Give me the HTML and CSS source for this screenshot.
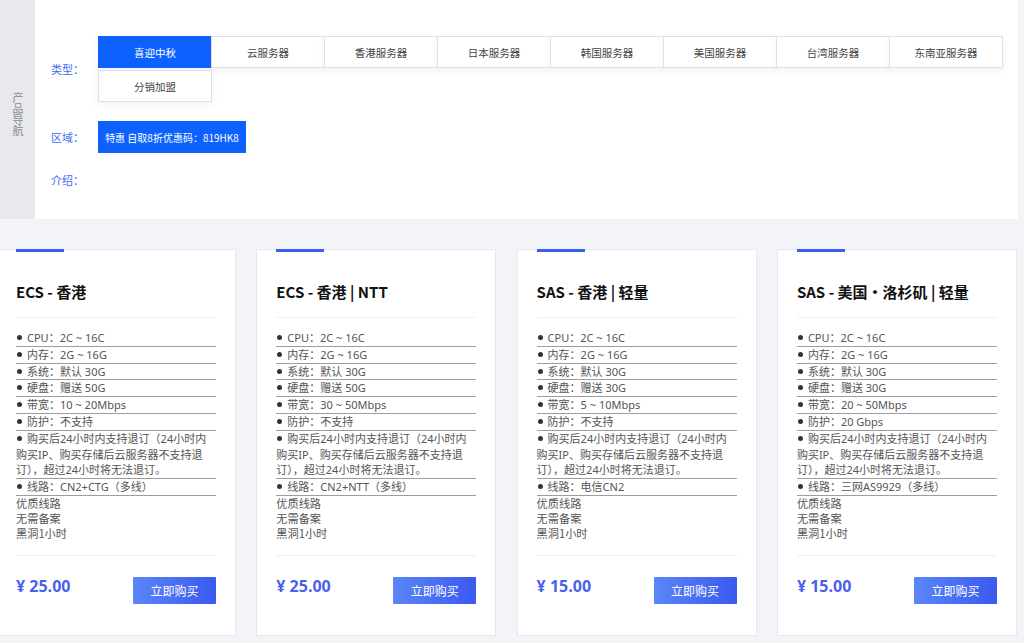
FILE: index.html
```html
<!DOCTYPE html>
<html lang="zh-CN">
<head>
<meta charset="utf-8">
<title>产品导航</title>
<link rel="stylesheet" href="styles.css">
</head>
<body>
<div class="top">
  <div class="side"><span class="side-text">产品导航</span></div>
  <div class="panel">
    <div class="row row-type">
      <div class="label">类型：</div>
      <div class="tabs">
        <div class="tab active">喜迎中秋</div>
        <div class="tab">云服务器</div>
        <div class="tab">香港服务器</div>
        <div class="tab">日本服务器</div>
        <div class="tab">韩国服务器</div>
        <div class="tab">美国服务器</div>
        <div class="tab">台湾服务器</div>
        <div class="tab">东南亚服务器</div>
        <div class="tab">分销加盟</div>
      </div>
    </div>
    <div class="row row-region">
      <div class="label">区域：</div>
      <div class="region-btn">特惠 自取8折优惠码：819HK8</div>
    </div>
    <div class="row row-intro">
      <div class="label">介绍：</div>
    </div>
  </div>
</div>

<div class="cards">
  <div class="card">
    <div class="accent"></div>
    <h3 class="title">ECS - 香港</h3>
    <ul class="specs">
      <li>CPU：2C ~ 16C</li>
      <li>内存：2G ~ 16G</li>
      <li>系统：默认 30G</li>
      <li>硬盘：赠送 50G</li>
      <li>带宽：10 ~ 20Mbps</li>
      <li>防护：不支持</li>
      <li>购买后24小时内支持退订（24小时内购买IP、购买存储后云服务器不支持退订），超过24小时将无法退订。</li>
      <li>线路：CN2+CTG（多线）</li>
    </ul>
    <div class="notes"><div>优质线路</div><div>无需备案</div><div>黑洞1小时</div></div>
    <div class="foot"><span class="price">¥ 25.00</span><span class="buy">立即购买</span></div>
  </div>
  <div class="card">
    <div class="accent"></div>
    <h3 class="title">ECS - 香港 | NTT</h3>
    <ul class="specs">
      <li>CPU：2C ~ 16C</li>
      <li>内存：2G ~ 16G</li>
      <li>系统：默认 30G</li>
      <li>硬盘：赠送 50G</li>
      <li>带宽：30 ~ 50Mbps</li>
      <li>防护：不支持</li>
      <li>购买后24小时内支持退订（24小时内购买IP、购买存储后云服务器不支持退订），超过24小时将无法退订。</li>
      <li>线路：CN2+NTT（多线）</li>
    </ul>
    <div class="notes"><div>优质线路</div><div>无需备案</div><div>黑洞1小时</div></div>
    <div class="foot"><span class="price">¥ 25.00</span><span class="buy">立即购买</span></div>
  </div>
  <div class="card">
    <div class="accent"></div>
    <h3 class="title">SAS - 香港 | 轻量</h3>
    <ul class="specs">
      <li>CPU：2C ~ 16C</li>
      <li>内存：2G ~ 16G</li>
      <li>系统：默认 30G</li>
      <li>硬盘：赠送 30G</li>
      <li>带宽：5 ~ 10Mbps</li>
      <li>防护：不支持</li>
      <li>购买后24小时内支持退订（24小时内购买IP、购买存储后云服务器不支持退订），超过24小时将无法退订。</li>
      <li>线路：电信CN2</li>
    </ul>
    <div class="notes"><div>优质线路</div><div>无需备案</div><div>黑洞1小时</div></div>
    <div class="foot"><span class="price">¥ 15.00</span><span class="buy">立即购买</span></div>
  </div>
  <div class="card">
    <div class="accent"></div>
    <h3 class="title">SAS - 美国・洛杉矶 | 轻量</h3>
    <ul class="specs">
      <li>CPU：2C ~ 16C</li>
      <li>内存：2G ~ 16G</li>
      <li>系统：默认 30G</li>
      <li>硬盘：赠送 30G</li>
      <li>带宽：20 ~ 50Mbps</li>
      <li>防护：20 Gbps</li>
      <li>购买后24小时内支持退订（24小时内购买IP、购买存储后云服务器不支持退订），超过24小时将无法退订。</li>
      <li>线路：三网AS9929（多线）</li>
    </ul>
    <div class="notes"><div>优质线路</div><div>无需备案</div><div>黑洞1小时</div></div>
    <div class="foot"><span class="price">¥ 15.00</span><span class="buy">立即购买</span></div>
  </div>
</div>
</body>
</html>
```

FILE: styles.css
```css
* { box-sizing: border-box; }
html, body { margin: 0; padding: 0; }
body {
  background: #f3f4f7;
  font-family: "Noto Sans CJK SC", "Noto Sans", sans-serif;
  color: #333;
  width: 1024px;
  height: 643px;
  overflow: hidden;
}

.top {
  display: flex;
  height: 219px;
}
.side {
  width: 35px;
  background: #e8e9ec;
  display: flex;
  align-items: center;
  justify-content: center;
  padding-top: 8px;
}
.side-text {
  writing-mode: vertical-rl;
  text-orientation: upright;
  font-size: 11px;
  line-height: 11px;
  color: #8c8c8c;
}
.panel {
  width: 983px;
  background: #fff;
  padding: 36px 0 0 16px;
}
.row {
  display: flex;
  align-items: center;
}
.label {
  width: 47px;
  font-size: 11px;
  color: #3d6cf0;
  flex: none;
}
.tabs {
  display: flex;
  flex-wrap: wrap;
  width: 906px;
  row-gap: 2px;
}
.tab {
  width: 114px;
  height: 32px;
  margin-right: -1px;
  border: 1px solid #dde0ec;
  background: #fff;
  font-size: 10.5px;
  color: #444;
  display: flex;
  align-items: center;
  justify-content: center;
  box-shadow: 0 3px 8px rgba(30, 40, 120, 0.05);
}
.tab.active {
  background: #0d62ff;
  border-color: #0d62ff;
  color: #fff;
}
.row-region { margin-top: 19px; }
.region-btn {
  height: 32px;
  width: 148px;
  background: #0d62ff;
  color: #fff;
  font-size: 10px;
  display: flex;
  align-items: center;
  justify-content: center;
  white-space: nowrap;
}
.row-intro { margin-top: 11px; height: 32px; }

.cards {
  display: flex;
  gap: 20.3px;
  margin: 30px 0 0 -4px;
}
.card {
  flex: none;
  width: 240px;
  height: 387px;
  background: #fff;
  border: 1px solid #e6e8ef;
  padding: 0 19px;
}
.accent {
  width: 48px;
  height: 3px;
  margin-top: -1px;
  background: #3a5ef0;
}
.title {
  margin: 30px 0 0;
  font-size: 15px;
  line-height: 20px;
  font-weight: 700;
  color: #111;
  padding-bottom: 15px;
  border-bottom: 1px solid #eef0f5;
  white-space: nowrap;
}
.specs {
  list-style: none;
  margin: 12px 0 0;
  padding: 0;
}
.specs li {
  font-family: "Noto Sans", "Noto Sans CJK SC", sans-serif;
  font-size: 11px;
  line-height: 15.8px;
  color: #555;
  padding-right: 2px;
  border-bottom: 1px solid #9d9d9d;
}
.specs li::before {
  content: "";
  display: inline-block;
  width: 5px;
  height: 5px;
  border-radius: 50%;
  background: #333;
  margin: 0 5px 0 1px;
  vertical-align: 2px;
}
.notes {
  font-size: 11.2px;
  line-height: 15px;
  color: #555;
  padding-bottom: 14px;
  border-bottom: 1px solid #eef0f7;
}
.foot {
  display: flex;
  justify-content: space-between;
  align-items: center;
  margin-top: 21px;
}
.price {
  font-size: 16px;
  font-weight: 700;
  color: #4a5ff0;
  position: relative;
  top: -4px;
  font-family: "Open Sans", "Noto Sans CJK SC", sans-serif;
}
.buy {
  width: 83px;
  height: 27px;
  display: flex;
  align-items: center;
  justify-content: center;
  font-size: 12px;
  color: #fff;
  background: linear-gradient(90deg, #5b86f7, #3a59ef);
  border-radius: 1px;
}
```
